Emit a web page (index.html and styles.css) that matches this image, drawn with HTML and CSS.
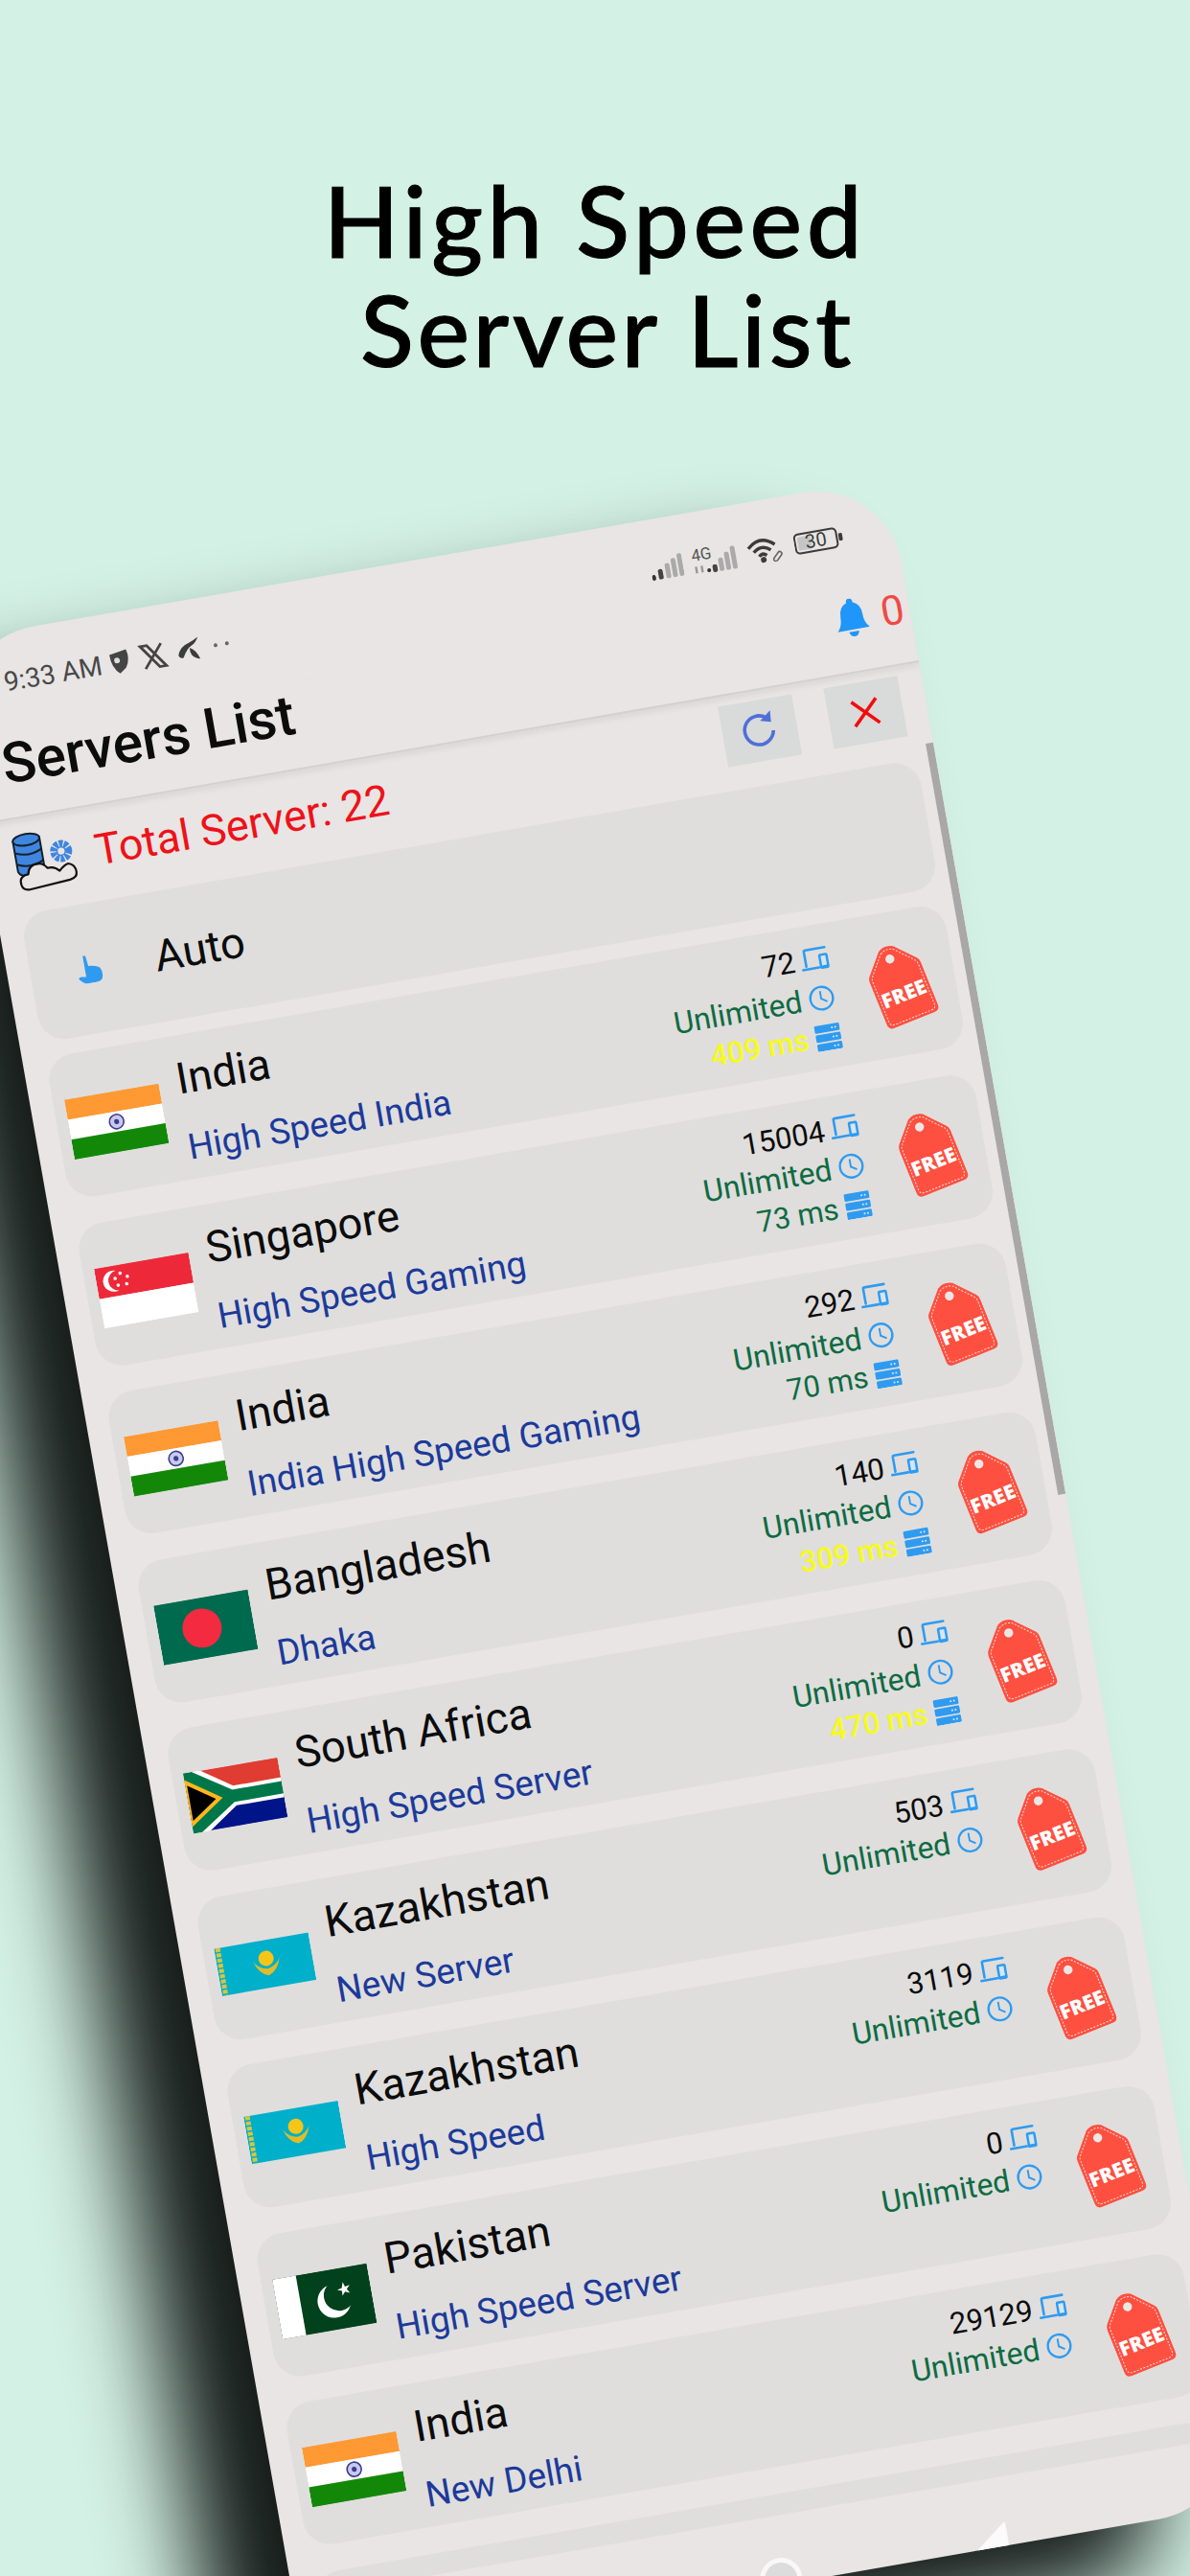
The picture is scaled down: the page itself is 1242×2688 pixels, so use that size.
FILE: index.html
```html
<!DOCTYPE html>
<html lang="en">
<head>
  <meta charset="UTF-8" />
  <meta name="viewport" content="width=device-width, initial-scale=1.0"/>
  <title>High Speed Server List</title>
  <link rel="stylesheet" href="styles.css">
</head>
<body>

  <!-- shared icons and flags -->
  <svg class="defs" width="0" height="0">
    <symbol id="i-device" viewBox="0 0 30 28">
      <path d="M5 20V4.5C5 3.5 5.5 3 6.5 3H27M1 23H18" fill="none" stroke="#2f9bf0" stroke-width="2.6" stroke-linecap="round"/>
      <rect x="19" y="9" width="10" height="16" rx="2" fill="#2f9bf0"/>
      <rect x="21.5" y="11.5" width="5" height="10" fill="#d6e6f2"/>
    </symbol>
    <symbol id="i-clock" viewBox="0 0 26 26">
      <circle cx="13" cy="13" r="11" fill="none" stroke="#2f9bf0" stroke-width="2.2"/>
      <path d="M12.5 6V13.5L18 17" fill="none" stroke="#2f9bf0" stroke-width="1.8"/>
    </symbol>
    <symbol id="i-server" viewBox="0 0 30 32">
      <rect x="0" y="1" width="30" height="9" rx="1.5" fill="#2f9bf0"/>
      <rect x="0" y="12" width="30" height="9" rx="1.5" fill="#2f9bf0"/>
      <rect x="0" y="23" width="30" height="9" rx="1.5" fill="#2f9bf0"/>
      <path d="M20 5.5h2M24 5.5h2M20 16.5h2M24 16.5h2M20 27.5h2M24 27.5h2" stroke="#d6e6f2" stroke-width="2"/>
    </symbol>
    <symbol id="i-tag" viewBox="0 0 60 84">
      <path d="M22 4Q30-1 38 4L56 24Q58 26 58 30V76Q58 82 52 82H8Q2 82 2 76V30Q2 26 4 24Z" fill="#fd5040"/>
      <path d="M23 7Q30 3 37 7L53 25Q55 27 55 31V74Q55 79 50 79H10Q5 79 5 74V31Q5 27 7 25Z" fill="none" stroke="#ffd9d2" stroke-width="1" stroke-dasharray="2 1.5"/>
      <circle cx="30" cy="15" r="4.6" fill="#ece7e5"/>
    </symbol>

    <symbol id="f-india" viewBox="0 0 100 63">
      <rect width="100" height="21" fill="#ff9933"/>
      <rect y="21" width="100" height="21" fill="#fff"/>
      <rect y="42" width="100" height="21" fill="#138808"/>
      <circle cx="50" cy="31.5" r="7.5" fill="#c9c9ee" stroke="#3d3d90" stroke-width="1.6"/>
      <circle cx="50" cy="31.5" r="2.6" fill="#3d3d90"/>
    </symbol>
    <symbol id="f-singapore" viewBox="0 0 100 63">
      <rect width="100" height="32" fill="#ed2939"/>
      <rect y="32" width="100" height="31" fill="#fff"/>
      <circle cx="18" cy="16" r="11" fill="#fff"/>
      <circle cx="23" cy="16" r="10.5" fill="#ed2939"/>
      <g fill="#fff">
        <circle cx="26" cy="9" r="1.8"/><circle cx="33" cy="13.5" r="1.8"/><circle cx="31" cy="21" r="1.8"/>
        <circle cx="22" cy="21" r="1.8"/><circle cx="20" cy="13.5" r="1.8"/>
      </g>
    </symbol>
    <symbol id="f-bangladesh" viewBox="0 0 100 63">
      <rect width="100" height="63" fill="#006a4e"/>
      <circle cx="46" cy="31.5" r="20.5" fill="#f42a41"/>
    </symbol>
    <symbol id="f-southafrica" viewBox="0 0 100 63">
      <rect width="100" height="31.5" fill="#e03c31"/>
      <rect y="31.5" width="100" height="31.5" fill="#001489"/>
      <path d="M0 0L46 31.5H100M0 63L46 31.5" fill="none" stroke="#fff" stroke-width="21"/>
      <path d="M-2 0L46 31.5H100M-2 63L46 31.5" fill="none" stroke="#007749" stroke-width="13"/>
      <path d="M0 9L33 31.5L0 54Z" fill="#000" stroke="#ffb81c" stroke-width="4"/>
    </symbol>
    <symbol id="f-kazakhstan" viewBox="0 0 100 50">
      <rect width="100" height="50" fill="#00afca"/>
      <path d="M4 0V50" stroke="#d9c53c" stroke-width="5" stroke-dasharray="4 1.5"/>
      <circle cx="52" cy="19" r="8" fill="#f5c518"/>
      <path d="M38 20Q42 34 52 37Q62 34 66 20Q62 28 52 30Q42 28 38 20Z" fill="#e0bc2a"/>
    </symbol>
    <symbol id="f-pakistan" viewBox="0 0 100 63">
      <rect width="100" height="63" fill="#01411c"/>
      <rect width="25" height="63" fill="#fff"/>
      <circle cx="60" cy="33" r="17.5" fill="#fff"/>
      <circle cx="66" cy="28" r="16" fill="#01411c"/>
      <path d="M72 15l1.6 5 5-1-3.6 3.8 2.6 4.4-4.8-2-3.4 3.8.4-5-4.8-2 5-1.2z" fill="#fff"/>
    </symbol>
  </svg>

  <h1 class="headline">High Speed<span>Server List</span></h1>

  <main class="phone">
    <div class="status-bar">
      <div class="status-left">
        <span class="clock">9:33 AM</span>
        <svg class="notif" width="24" height="26" viewBox="0 0 24 26">
          <path d="M3 4L21 1Q24 12 18 20L11 25Q3 18 3 4Z" fill="#444"/>
          <circle cx="10" cy="11" r="3" fill="#ddd"/>
        </svg>
        <svg class="notif" width="30" height="28" viewBox="0 0 30 28">
          <path d="M3 2H10L27 26H20ZM25 2L5 26" fill="none" stroke="#444" stroke-width="2.8"/>
        </svg>
        <svg class="notif" width="28" height="26" viewBox="0 0 28 26">
          <path d="M2 17Q5 8 14 6Q20 4 25 1Q22 7 17 9Q12 11 7 20Q3 21 2 17ZM15 11Q21 14 24 24Q19 23 16 19Q14 15 15 11Z" fill="#3c3c3c"/>
        </svg>
        <svg class="notif" width="24" height="8" viewBox="0 0 24 8">
          <circle cx="5" cy="4" r="2" fill="#666"/><circle cx="17" cy="4" r="2" fill="#666"/>
        </svg>
      </div>
      <div class="status-right">
        <svg width="34" height="24" viewBox="0 0 34 24">
          <rect x="0" y="18" width="4" height="6" rx="2" fill="#333"/>
          <rect x="7" y="13" width="5" height="11" rx="2" fill="#444"/>
          <rect x="15" y="8" width="5" height="16" rx="2" fill="#aaa"/>
          <rect x="22" y="4" width="5" height="20" rx="2" fill="#aaa"/>
          <rect x="29" y="0" width="5" height="24" rx="2" fill="#aaa"/>
        </svg>
        <svg width="48" height="30" viewBox="0 0 48 30">
          <text x="0" y="14" class="mini-text">4G</text>
          <path d="M3 20v7M9 20v7" stroke="#999" stroke-width="2.4"/>
          <rect x="14" y="24" width="4" height="4" rx="2" fill="#333"/>
          <rect x="20" y="21" width="5" height="8" rx="2" fill="#444"/>
          <rect x="27" y="15" width="5" height="14" rx="2" fill="#aaa"/>
          <rect x="34" y="10" width="5" height="19" rx="2" fill="#aaa"/>
          <rect x="41" y="5" width="5" height="24" rx="2" fill="#aaa"/>
        </svg>
        <svg width="40" height="28" viewBox="0 0 40 28">
          <path d="M2 10Q16-3 30 10M7 15Q16 7 25 15M12 20Q16 16 20 20" fill="none" stroke="#3b3b3b" stroke-width="3.4"/>
          <circle cx="16" cy="24" r="3" fill="#3b3b3b"/>
          <path d="M27 24l5-5a2 2 0 0 1 3 3l-5 5a2 2 0 0 1-3-3z" fill="none" stroke="#666" stroke-width="1.6"/>
        </svg>
        <svg width="52" height="24" viewBox="0 0 52 24">
          <rect x="1" y="2" width="44" height="20" rx="4" fill="none" stroke="#3b3b3b" stroke-width="2"/>
          <rect x="4" y="5" width="14" height="14" rx="1" fill="#c5c5c5"/>
          <rect x="47" y="8" width="4" height="8" rx="1.5" fill="#3b3b3b"/>
          <text x="23" y="18" class="mini-text batt">30</text>
        </svg>
      </div>
    </div>

    <header class="app-bar">
      <strong class="page-title">Servers List</strong>
      <div class="alerts">
        <svg width="34" height="40" viewBox="0 0 32 38">
          <path d="M16 0a3 3 0 0 1 3 4Q27 7 27 17Q27 26 32 31H0Q5 26 5 17Q5 7 13 4A3 3 0 0 1 16 0ZM11 33H21Q20 38 16 38Q12 38 11 33Z" fill="#1e96fa"/>
        </svg>
        <span class="alert-count">0</span>
      </div>
    </header>

    <div class="total-row">
      <div class="total-left">
        <svg width="70" height="62" viewBox="0 0 70 62">
          <path d="M2 8V40Q4 46 16 46L30 44V8Z" fill="#3f86e0" stroke="#16202c" stroke-width="2"/>
          <ellipse cx="16" cy="8" rx="14" ry="6" fill="#3f86e0" stroke="#16202c" stroke-width="2"/>
          <path d="M2 20Q16 27 30 20M2 32Q16 39 30 32" fill="none" stroke="#16202c" stroke-width="2"/>
          <circle cx="50" cy="26" r="8" fill="none" stroke="#3f86e0" stroke-width="7" stroke-dasharray="4 1.2"/>
          <circle cx="50" cy="26" r="5" fill="#3f86e0"/>
          <circle cx="50" cy="26" r="3.6" fill="#e8e5e4"/>
          <path d="M11 60Q2 60 3 50Q4 44 12 44Q14 34 24 35Q29 35 33 41Q40 40 45 46Q50 41 55 40Q62 42 62 50Q62 56 54 57Z" fill="#e8e5e4" stroke="#111" stroke-width="2.2" stroke-linejoin="round"/>
        </svg>
        <span class="total-label">Total Server: 22</span>
      </div>
      <div class="tool-btns">
        <button class="tool-btn">
          <svg width="40" height="42" viewBox="0 0 40 42">
            <path d="M29 9A15 15 0 1 0 34 23" fill="none" stroke="#4f6fd8" stroke-width="3.6"/>
            <path d="M22 11L33 14L34 2Z" fill="#4f6fd8"/>
          </svg>
        </button>
        <button class="tool-btn">
          <svg width="30" height="30" viewBox="0 0 30 30">
            <path d="M2 2L28 28M28 2L2 28" stroke="#f20d0d" stroke-width="3.6"/>
          </svg>
        </button>
      </div>
    </div>

    <div class="server-list">
      <div class="card card-auto">
        <svg class="hand" width="26" height="30" viewBox="0 0 26 30">
          <path d="M8 1Q11 0 11 3L12 12Q18 12 23 15Q26 18 25 25Q24 30 18 30H8Q4 29 0 24Q0 22 3 22L8 23Z" fill="#2f9bf0"/>
        </svg>
        <span class="name">Auto</span>
      </div>

      <div class="card">
        <svg class="flag"><use href="#f-india"/></svg>
        <div class="names"><div class="name">India</div><div class="sub">High Speed India</div></div>
        <div class="stats">
          <div class="stat">72<svg class="ico"><use href="#i-device"/></svg></div>
          <div class="stat green">Unlimited<svg class="ico"><use href="#i-clock"/></svg></div>
          <div class="stat yellow">409 ms<svg class="ico"><use href="#i-server"/></svg></div>
        </div>
        <div class="tag"><svg><use href="#i-tag"/></svg><span>FREE</span></div>
      </div>

      <div class="card">
        <svg class="flag"><use href="#f-singapore"/></svg>
        <div class="names"><div class="name">Singapore</div><div class="sub">High Speed Gaming</div></div>
        <div class="stats">
          <div class="stat">15004<svg class="ico"><use href="#i-device"/></svg></div>
          <div class="stat green">Unlimited<svg class="ico"><use href="#i-clock"/></svg></div>
          <div class="stat ping">73 ms<svg class="ico"><use href="#i-server"/></svg></div>
        </div>
        <div class="tag"><svg><use href="#i-tag"/></svg><span>FREE</span></div>
      </div>

      <div class="card">
        <svg class="flag"><use href="#f-india"/></svg>
        <div class="names"><div class="name">India</div><div class="sub">India High Speed Gaming</div></div>
        <div class="stats">
          <div class="stat">292<svg class="ico"><use href="#i-device"/></svg></div>
          <div class="stat green">Unlimited<svg class="ico"><use href="#i-clock"/></svg></div>
          <div class="stat ping">70 ms<svg class="ico"><use href="#i-server"/></svg></div>
        </div>
        <div class="tag"><svg><use href="#i-tag"/></svg><span>FREE</span></div>
      </div>

      <div class="card">
        <svg class="flag"><use href="#f-bangladesh"/></svg>
        <div class="names"><div class="name">Bangladesh</div><div class="sub">Dhaka</div></div>
        <div class="stats">
          <div class="stat">140<svg class="ico"><use href="#i-device"/></svg></div>
          <div class="stat green">Unlimited<svg class="ico"><use href="#i-clock"/></svg></div>
          <div class="stat yellow">309 ms<svg class="ico"><use href="#i-server"/></svg></div>
        </div>
        <div class="tag"><svg><use href="#i-tag"/></svg><span>FREE</span></div>
      </div>

      <div class="card">
        <svg class="flag"><use href="#f-southafrica"/></svg>
        <div class="names"><div class="name">South Africa</div><div class="sub">High Speed Server</div></div>
        <div class="stats">
          <div class="stat">0<svg class="ico"><use href="#i-device"/></svg></div>
          <div class="stat green">Unlimited<svg class="ico"><use href="#i-clock"/></svg></div>
          <div class="stat yellow">470 ms<svg class="ico"><use href="#i-server"/></svg></div>
        </div>
        <div class="tag"><svg><use href="#i-tag"/></svg><span>FREE</span></div>
      </div>

      <div class="card">
        <svg class="flag"><use href="#f-kazakhstan"/></svg>
        <div class="names"><div class="name">Kazakhstan</div><div class="sub">New Server</div></div>
        <div class="stats">
          <div class="stat">503<svg class="ico"><use href="#i-device"/></svg></div>
          <div class="stat green">Unlimited<svg class="ico"><use href="#i-clock"/></svg></div>
        </div>
        <div class="tag"><svg><use href="#i-tag"/></svg><span>FREE</span></div>
      </div>

      <div class="card">
        <svg class="flag"><use href="#f-kazakhstan"/></svg>
        <div class="names"><div class="name">Kazakhstan</div><div class="sub">High Speed</div></div>
        <div class="stats">
          <div class="stat">3119<svg class="ico"><use href="#i-device"/></svg></div>
          <div class="stat green">Unlimited<svg class="ico"><use href="#i-clock"/></svg></div>
        </div>
        <div class="tag"><svg><use href="#i-tag"/></svg><span>FREE</span></div>
      </div>

      <div class="card">
        <svg class="flag"><use href="#f-pakistan"/></svg>
        <div class="names"><div class="name">Pakistan</div><div class="sub">High Speed Server</div></div>
        <div class="stats">
          <div class="stat">0<svg class="ico"><use href="#i-device"/></svg></div>
          <div class="stat green">Unlimited<svg class="ico"><use href="#i-clock"/></svg></div>
        </div>
        <div class="tag"><svg><use href="#i-tag"/></svg><span>FREE</span></div>
      </div>

      <div class="card">
        <svg class="flag"><use href="#f-india"/></svg>
        <div class="names"><div class="name">India</div><div class="sub">New Delhi</div></div>
        <div class="stats">
          <div class="stat">29129<svg class="ico"><use href="#i-device"/></svg></div>
          <div class="stat green">Unlimited<svg class="ico"><use href="#i-clock"/></svg></div>
        </div>
        <div class="tag"><svg><use href="#i-tag"/></svg><span>FREE</span></div>
      </div>

      <div class="card"></div>
    </div>

    <div class="scrollbar"></div>

    <nav class="nav-bar">
      <div class="home-btn"></div>
      <svg class="back-btn" width="34" height="50" viewBox="0 0 34 50">
        <path d="M32 2V48L2 25Z" fill="#fbfbfb" stroke="#fbfbfb" stroke-width="3" stroke-linejoin="round"/>
      </svg>
    </nav>
  </main>

</body>
</html>
```

FILE: styles.css
```css
* {
  box-sizing: border-box;
}

html, body {
  height: 2688px;
  overflow: hidden;
}

body {
  margin: 0;
  background: #d4f1e5;
  font-family: Roboto, "Liberation Sans", sans-serif;
  color: #0c0c0c;
}

.defs {
  display: block;
  height: 0;
}

.headline {
  margin: 0;
  padding: 172px 0 0 0;
  height: 400px;
  width: 1242px;
  font-family: Lato, "Open Sans", sans-serif;
  font-size: 103px;
  font-weight: 500;
  line-height: 114px;
  letter-spacing: 4.6px;
  -webkit-text-stroke: 1px #000;
  text-align: center;
  color: #000;
}

.headline span {
  display: block;
  padding-left: 26px;
  letter-spacing: 3.6px;
}

/* the phone is one tilted screen, everything inside is normal flow */
.phone {
  position: relative;
  width: 994px;
  height: 2147px;
  margin: 269px 0 0 -54px;
  background: #e8e5e4;
  border-radius: 90px;
  overflow: hidden;
  transform-origin: 0 0;
  transform: rotate(-9.85deg) skewX(0.15deg);
  box-shadow: -90px 60px 90px #161c1a;
}

.status-bar {
  display: flex;
  justify-content: space-between;
  align-items: center;
  height: 104px;
  padding: 0 55px 0 50px;
}

.status-left {
  display: flex;
  align-items: center;
}

.clock {
  font-size: 28px;
  color: #484848;
  width: 110px;
}

.notif {
  margin-right: 9px;
}

.status-right {
  display: flex;
  align-items: center;
  gap: 10px;
}

.mini-text {
  font-family: Roboto, sans-serif;
  font-size: 17px;
  fill: #555;
}

.batt {
  font-size: 20px;
  text-anchor: middle;
  fill: #3b3b3b;
}

.app-bar {
  display: flex;
  justify-content: space-between;
  align-items: center;
  height: 91px;
  padding: 0 6px 23px 33px;
  border-bottom: 2px solid #d3d1d0;
  box-shadow: 0 4px 6px rgba(0,0,0,0.06);
}

.page-title {
  font-size: 58.5px;
  font-weight: 500;
  line-height: 68px;
}

.alerts {
  display: flex;
  align-items: center;
  gap: 14px;
}

.alert-count {
  font-size: 43px;
  color: #f04a45;
}

.total-row {
  display: flex;
  justify-content: space-between;
  height: 99px;
  padding: 10px 25px 0 28px;
}

.total-left {
  display: flex;
  align-items: center;
  gap: 15px;
  height: 72px;
}

.total-label {
  font-size: 45px;
  color: #ee1219;
}

.tool-btns {
  display: flex;
  gap: 34px;
}

.tool-btn {
  display: flex;
  align-items: center;
  justify-content: center;
  width: 78px;
  height: 64px;
  padding: 0;
  border: none;
  background: #d9dada;
}

.server-list {
  display: flex;
  flex-direction: column;
  gap: 27.5px;
  height: 1781px;
  padding-left: 24px;
  overflow: hidden;
}

.card {
  display: flex;
  flex-shrink: 0;
  align-items: center;
  width: 950px;
  height: 151px;
  padding-left: 12px;
  padding-right: 12px;
  background: #dfdedd;
  border-radius: 28px;
}

.card-auto {
  height: 136px;
  margin-bottom: -11.5px;
  padding-left: 49px;
  gap: 56px;
}

.flag {
  flex-shrink: 0;
  width: 100px;
  height: 64px;
  margin-top: 5px;
  margin-right: 19px;
}

.names {
  flex: 1;
  align-self: flex-start;
  padding-top: 20px;
}

.name {
  font-size: 45.5px;
  line-height: 52px;
}

.sub {
  margin-top: 24px;
  font-size: 37px;
  line-height: 44px;
  color: #1c3a9a;
}

.stats {
  align-self: flex-start;
  padding-top: 15px;
}

.stat {
  display: flex;
  align-items: center;
  justify-content: flex-end;
  gap: 6px;
  height: 41px;
  font-size: 31px;
}

.ico {
  width: 30px;
  height: 28px;
}

.green {
  color: #0f6b42;
  font-size: 32px;
}

.ping {
  color: #0f6b42;
}

.yellow {
  color: #f6fa1e;
  font-weight: 500;
}

.tag {
  position: relative;
  width: 64px;
  height: 86px;
  margin-left: 36px;
  margin-right: 14px;
  transform: rotate(-12deg);
}

.tag svg {
  display: block;
  width: 64px;
  height: 86px;
}

.tag span {
  position: absolute;
  left: 0;
  top: 42px;
  width: 64px;
  font-family: "Open Sans", sans-serif;
  font-size: 21px;
  font-weight: 800;
  line-height: 24px;
  text-align: center;
  color: #fff;
}

.scrollbar {
  position: absolute;
  top: 280px;
  left: 986px;
  width: 8px;
  height: 796px;
  background: #a9a7a7;
}

.nav-bar {
  display: flex;
  align-items: flex-start;
  height: 71px;
  padding: 44px 0 0 483px;
}

.home-btn {
  width: 44px;
  height: 44px;
  flex-shrink: 0;
  border: 5px solid #f8f8f8;
  border-radius: 50%;
  background: #dcdcdc;
}

.back-btn {
  flex-shrink: 0;
  margin-left: 185px;
  margin-top: 3px;
}
```
